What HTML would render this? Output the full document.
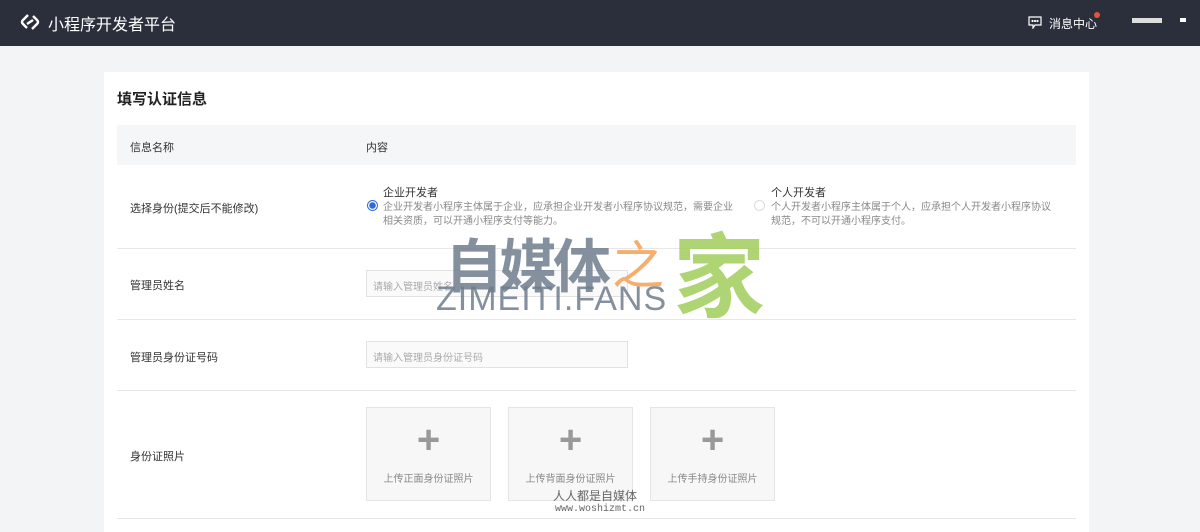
<!DOCTYPE html>
<html><head><meta charset="utf-8"><style>
*{margin:0;padding:0;box-sizing:border-box}
body{width:1200px;height:524px;overflow:hidden;background:#f3f4f6;font-family:"Liberation Sans","Noto Sans CJK SC",sans-serif;position:relative}
.top{height:46px;background:#2a2f3b;position:relative;color:#fff}
.top .t{position:absolute;left:48px;top:11px;font-size:16px}
.card{position:absolute;left:104px;top:72px;width:985px;height:460px;background:#fff}
.h{position:absolute;left:13px;top:16px;font-size:15px;color:#222;font-weight:bold}
.th{position:absolute;left:13px;top:53px;width:959px;height:40px;background:#f5f6f7;font-size:11px;color:#333}
.row{position:absolute;left:13px;width:959px;border-bottom:1px solid #e7e7e7;font-size:11px;color:#333}
.lab{position:absolute;left:13px}
.inp{position:absolute;left:249px;width:262px;height:27px;border:1px solid #e2e2e2;background:#fafafa;font-size:10px;color:#aaa;padding:7px 6px}
.up{position:absolute;top:16px;width:125px;height:94px;border:1px solid #e5e5e5;background:#f7f7f7;text-align:center;font-size:10px;color:#888}
.up b{display:block;font-size:40px;font-weight:bold;color:#999;line-height:36px;margin-top:14px;margin-bottom:12px}
.d{font-size:10px;color:#888;line-height:14px}
</style></head><body>
<div class="top">
<svg style="position:absolute;left:19px;top:11px" width="22" height="22" viewBox="0 0 22 22" fill="none" stroke="#fff" stroke-width="2.4"><path d="M9 4L4 9Q2 11 4 13L8 17"/><path d="M13 18L18 13Q20 11 18 9L14 5"/><path d="M8 13L14 9"/></svg>
<div class="t">小程序开发者平台</div>
<svg style="position:absolute;left:1028px;top:16px" width="14" height="13" viewBox="0 0 14 13" fill="none" stroke="#fff" stroke-width="1.2"><path d="M1 1h12v8H7l-2 3V9H1z"/><circle cx="4.5" cy="5" r=".5" fill="#fff"/><circle cx="7" cy="5" r=".5" fill="#fff"/><circle cx="9.5" cy="5" r=".5" fill="#fff"/></svg>
<div style="position:absolute;left:1049px;top:15px;font-size:12px">消息中心</div>
<div style="position:absolute;left:1094px;top:12px;width:6px;height:6px;border-radius:50%;background:#e5533c"></div>
<div style="position:absolute;left:1132px;top:18px;width:30px;height:5px;background:#ddd"></div>
<div style="position:absolute;left:1180px;top:18px;width:6px;height:4px;background:#fff"></div>
</div>
<div class="card">
<div class="h">填写认证信息</div>
<div class="th"><span style="position:absolute;left:13px;top:14px">信息名称</span><span style="position:absolute;left:249px;top:14px">内容</span></div>
<div class="row" style="top:93px;height:84px"><span class="lab" style="top:35px">选择身份(提交后不能修改)</span>
<div style="position:absolute;left:250px;top:35px;width:11px;height:11px;border-radius:50%;border:1px solid #2f6bd8;background:radial-gradient(#2f6bd8 3px,#fff 3.5px)"></div>
<div style="position:absolute;left:266px;top:19px;width:356px"><div style="font-size:11px;color:#333;margin-bottom:1px">企业开发者</div><div class="d">企业开发者小程序主体属于企业，应承担企业开发者小程序协议规范，需要企业相关资质，可以开通小程序支付等能力。</div></div>
<div style="position:absolute;left:637px;top:35px;width:11px;height:11px;border-radius:50%;border:1px solid #ddd"></div>
<div style="position:absolute;left:654px;top:19px;width:286px"><div style="font-size:11px;color:#333;margin-bottom:1px">个人开发者</div><div class="d">个人开发者小程序主体属于个人，应承担个人开发者小程序协议规范，不可以开通小程序支付。</div></div>
</div>
<div class="row" style="top:177px;height:71px"><span class="lab" style="top:28px">管理员姓名</span><div class="inp" style="top:21px">请输入管理员姓名</div></div>
<div class="row" style="top:248px;height:71px"><span class="lab" style="top:29px">管理员身份证号码</span><div class="inp" style="top:21px">请输入管理员身份证号码</div></div>
<div class="row" style="top:319px;height:128px"><span class="lab" style="top:57px">身份证照片</span>
<div class="up" style="left:249px"><b>+</b>上传正面身份证照片</div>
<div class="up" style="left:391px"><b>+</b>上传背面身份证照片</div>
<div class="up" style="left:533px"><b>+</b>上传手持身份证照片</div>
</div>
</div>
<div style="position:absolute;left:445px;top:220px;font-size:58px;font-weight:bold;color:rgba(110,125,140,.85);letter-spacing:-4px">自媒体</div>
<div style="position:absolute;left:612px;top:224px;font-size:52px;color:rgba(245,165,95,.9)">之</div>
<div style="position:absolute;left:673px;top:204px;font-size:92px;font-weight:bold;color:rgba(160,205,90,.85)">家</div>
<div style="position:absolute;left:436px;top:280px;font-size:34px;color:rgba(110,125,140,.85);letter-spacing:1px">ZIMEITI.FANS</div>
<div style="position:absolute;left:553px;top:487px;font-size:12px;color:#666">人人都是自媒体</div>
<div style="position:absolute;left:555px;top:504px;font-size:10px;color:#666;font-family:'Liberation Mono',monospace">www.woshizmt.cn</div>
</body></html>
